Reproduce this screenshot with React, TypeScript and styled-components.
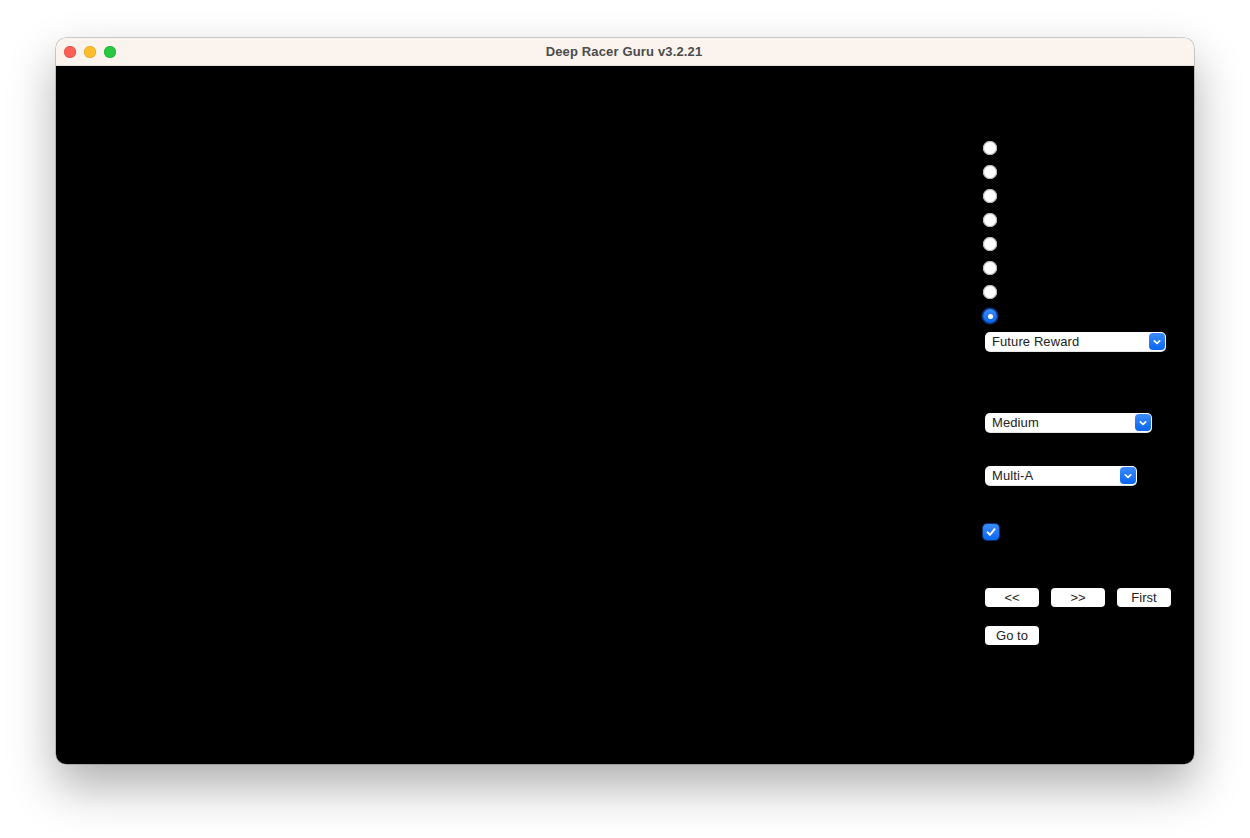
import React from "react";
import styled, { createGlobalStyle } from "styled-components";

const GlobalStyle = createGlobalStyle`
  html, body { margin: 0; padding: 0; background: #ffffff; }
  body { font-family: "Liberation Sans", Arial, sans-serif; }
  * { box-sizing: border-box; }
`;

const Stage = styled.div`
  width: 1250px;
  height: 838px;
  padding: 38px 0 0 56px;
  overflow: hidden;
`;

const Window = styled.div`
  width: 1138px;
  height: 726px;
  border-radius: 10px;
  overflow: hidden;
  display: flex;
  flex-direction: column;
  box-shadow: 0 22px 48px rgba(0, 0, 0, 0.32), 0 0 0 0.5px rgba(0, 0, 0, 0.35);
`;

const TitleBar = styled.div`
  height: 28px;
  flex: none;
  background: #faf3ee;
  display: grid;
  grid-template-columns: 1fr auto 1fr;
  align-items: center;
  padding: 0 8px;
  border-bottom: 1px solid #e2dcd7;
`;

const Lights = styled.div`
  display: flex;
  gap: 8px;
  align-items: center;
`;

const Light = styled.span<{ $c: string; $b: string }>`
  width: 12px;
  height: 12px;
  border-radius: 50%;
  background: ${(p) => p.$c};
  box-shadow: inset 0 0 0 0.5px ${(p) => p.$b};
`;

const Title = styled.div`
  font-size: 13px;
  font-weight: 700;
  color: #4b4b4b;
  letter-spacing: 0.15px;
  margin-right: 2px;
`;

const Body = styled.div`
  flex: 1;
  background: #000000;
  display: flex;
`;

const Canvas = styled.div`
  width: 927px;
  flex: none;
`;

const Panel = styled.div`
  display: flex;
  flex-direction: column;
  align-items: flex-start;
  padding-top: 70px;
`;

const RadioRow = styled.div`
  height: 24px;
  display: flex;
  align-items: center;
`;

const Radio = styled.span<{ $on?: boolean }>`
  width: 14px;
  height: 14px;
  border-radius: 50%;
  display: flex;
  align-items: center;
  justify-content: center;
  background: ${(p) => (p.$on ? "linear-gradient(#3d8bff, #0a66f0)" : "#ffffff")};
  box-shadow: ${(p) =>
    p.$on
      ? "0 0 0 1.5px rgba(10, 102, 240, 0.55)"
      : "inset 0 0 0 1px #b9b9b9, inset 0 1px 1px rgba(0,0,0,0.12)"};
  &::after {
    content: "";
    display: ${(p) => (p.$on ? "block" : "none")};
    width: 5px;
    height: 5px;
    border-radius: 50%;
    background: #ffffff;
  }
`;

const Select = styled.div<{ $w: number; $mt: number }>`
  width: ${(p) => p.$w}px;
  height: 20px;
  margin-top: ${(p) => p.$mt}px;
  margin-left: 2px;
  background: #ffffff;
  border-radius: 5px;
  display: flex;
  align-items: center;
  justify-content: space-between;
  padding: 0 1px 0 7px;
  font-size: 13px;
  letter-spacing: 0.1px;
  color: #222222;
  box-shadow: inset 0 -0.5px 0 rgba(0, 0, 0, 0.2);
`;

const SelectText = styled.span`
  margin-top: -2px;
`;

const Chevron = styled.span`
  width: 16px;
  height: 17px;
  border-radius: 4px;
  background: linear-gradient(#3d8bff, #0a66f0);
  display: flex;
  align-items: center;
  justify-content: center;
  margin-top: -1px;
`;

const Check = styled.span`
  width: 16px;
  height: 16px;
  margin-top: 38px;
  border-radius: 4px;
  background: linear-gradient(#3d8bff, #0a66f0);
  display: flex;
  align-items: center;
  justify-content: center;
  box-shadow: 0 0 0 1px rgba(10, 102, 240, 0.5);
`;

const ButtonRow = styled.div<{ $mt: number }>`
  display: flex;
  gap: 12px;
  margin-top: ${(p) => p.$mt}px;
  margin-left: 2px;
`;

const Button = styled.button`
  width: 54px;
  height: 19px;
  border: none;
  border-radius: 4px;
  background: #ffffff;
  color: #222222;
  font-family: "Liberation Sans", Arial, sans-serif;
  font-size: 13px;
  padding: 0 0 1px 0;
  display: flex;
  align-items: center;
  justify-content: center;
  box-shadow: 0 0.5px 1px rgba(0, 0, 0, 0.3);
`;

const ChevronIcon = () => (
  <svg width="10" height="10" viewBox="0 0 10 10">
    <path d="M2.3 3.8 L5 6.4 L7.7 3.8" fill="none" stroke="#fff" strokeWidth="1.6" strokeLinecap="round" strokeLinejoin="round" />
  </svg>
);

const CheckIcon = () => (
  <svg width="12" height="12" viewBox="0 0 12 12">
    <path d="M2.6 6.4 L5 8.8 L9.6 3.2" fill="none" stroke="#fff" strokeWidth="2" strokeLinecap="round" strokeLinejoin="round" />
  </svg>
);

export default function App() {
  const radios = [false, false, false, false, false, false, false, true];
  return (
    <>
      <GlobalStyle />
      <Stage>
        <Window>
          <TitleBar>
            <Lights>
              <Light $c="#fe5f57" $b="#e1463f" />
              <Light $c="#febc2e" $b="#dea123" />
              <Light $c="#28c840" $b="#1aab2e" />
            </Lights>
            <Title>Deep Racer Guru v3.2.21</Title>
            <span />
          </TitleBar>
          <Body>
            <Canvas />
            <Panel>
              {radios.map((on, i) => (
                <RadioRow key={i}>
                  <Radio $on={on} />
                </RadioRow>
              ))}
              <Select $w={181} $mt={4}>
                <SelectText>Future Reward</SelectText>
                <Chevron><ChevronIcon /></Chevron>
              </Select>
              <Select $w={167} $mt={61}>
                <SelectText>Medium</SelectText>
                <Chevron><ChevronIcon /></Chevron>
              </Select>
              <Select $w={152} $mt={33}>
                <SelectText>Multi-A</SelectText>
                <Chevron><ChevronIcon /></Chevron>
              </Select>
              <Check><CheckIcon /></Check>
              <ButtonRow $mt={48}>
                <Button>&lt;&lt;</Button>
                <Button>&gt;&gt;</Button>
                <Button>First</Button>
              </ButtonRow>
              <ButtonRow $mt={19}>
                <Button>Go to</Button>
              </ButtonRow>
            </Panel>
          </Body>
        </Window>
      </Stage>
    </>
  );
}
